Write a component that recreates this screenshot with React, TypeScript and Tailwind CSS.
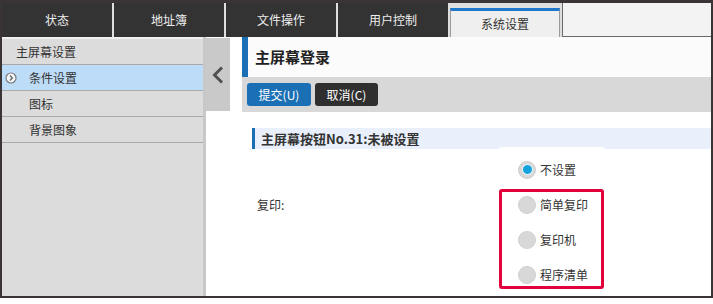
import React from "react";

const tabs = ["状态", "地址簿", "文件操作", "用户控制"];
const menu = [
  { label: "主屏幕设置", top: true },
  { label: "条件设置", active: true },
  { label: "图标" },
  { label: "背景图象" },
];
const options = [
  { label: "不设置", checked: true },
  { label: "简单复印" },
  { label: "复印机" },
  { label: "程序清单" },
];

function Radio({ checked }: { checked?: boolean }) {
  return (
    <span className="w-[18px] h-[18px] rounded-full bg-[#d8d8d8] border border-[#cfcfcf] flex items-center justify-center shrink-0">
      {checked && <span className="w-[11px] h-[11px] rounded-full bg-[#16a2dc] border-[1.5px] border-white" />}
    </span>
  );
}

export default function App() {
  return (
    <div className="w-[713px] h-[304px] bg-white font-['Noto_Sans_CJK_SC',sans-serif] text-[#333]">
      <div className="h-[298px] border-2 border-[#3a3434] flex flex-col overflow-hidden">
        {/* tab bar */}
        <div className="h-[35px] flex gap-[2px] bg-[#dedede] border-t border-[#3a3434] shrink-0">
          {tabs.map(t => (
            <div key={t} className="w-[110px] h-full bg-[#333333] text-[#eeeeee] text-[12px] flex items-center justify-center">
              {t}
            </div>
          ))}
          <div className="w-[110px] mt-[5px] bg-[#efefef] border-t-[3px] border-t-[#1f77c9] border-x border-x-[#9a9a9a] text-[12px] flex items-center justify-center">
            系统设置
          </div>
          <div className="flex-1 bg-[#f3f3f3] border-l border-b border-[#6b6b6b]" />
        </div>

        <div className="flex-1 flex min-h-0">
          {/* sidebar */}
          <div className="w-[204px] bg-[#dcdcdc] border-r-[3px] border-[#c8c8c8] flex flex-col">
            <div className="h-[2px] bg-[#efefef]" />
            {menu.map(m => (
              <div
                key={m.label}
                className={`h-[26px] border-b border-[#a9a9a9] flex items-center text-[12px] ${m.active ? "bg-[#bddcf7]" : ""} ${m.top ? "pl-[14px]" : "pl-[27px]"} relative`}
              >
                {m.active && (
                  <svg className="absolute left-[3px] top-[7px]" width="12" height="12" viewBox="0 0 12 12">
                    <circle cx="6" cy="6" r="5" fill="#f4f8fc" stroke="#7a7a7a" strokeWidth="1.2" />
                    <path d="M5 3.5 L7.3 6 L5 8.5" fill="none" stroke="#666" strokeWidth="1.4" />
                  </svg>
                )}
                {m.label}
              </div>
            ))}
          </div>

          {/* collapse button */}
          <div className="w-[24px] pt-[1px]">
            <div className="h-[73px] bg-[#c9c9c9] flex items-center justify-center">
              <svg width="12" height="18" viewBox="0 0 12 18">
                <path d="M10 1.5 L2.5 9 L10 16.5" fill="none" stroke="#505050" strokeWidth="3" />
              </svg>
            </div>
          </div>

          {/* main */}
          <div className="flex-1 ml-[12px] flex flex-col">
            <div className="h-[40px] bg-[#fbfbfb] border-l-[6px] border-[#1a6fb5] flex items-center pl-[7px] text-[15px] font-bold text-[#222]">
              主屏幕登录
            </div>
            <div className="h-[35px] bg-[#d8d8d8] flex items-start gap-[4px] pl-[5px] pt-[6px]">
              <button className="w-[64px] h-[23px] rounded-[3px] bg-[#1b6fb4] text-white text-[12px]">提交(U)</button>
              <button className="w-[63px] h-[23px] rounded-[3px] bg-[#2f2f2f] text-white text-[12px]">取消(C)</button>
            </div>
            <div className="h-[16px]" />
            <div className="ml-[10px] h-[21px] border-l-[3px] border-[#1a6fb5] bg-[#e9f0fb] flex items-center pl-[6px] text-[13px] font-bold">
              主屏幕按钮No.31:未被设置
            </div>
            <div className="flex">
              <div className="w-[256px] pl-[15px] pt-[47px] text-[12px]">复印:</div>
              <div className="w-[107px] -mt-[2px] bg-white rounded-[4px] pt-[5px] relative">
                {options.map(o => (
                  <div key={o.label} className="h-[35px] flex items-center gap-[4px] pl-[20px] text-[12px]">
                    <Radio checked={o.checked} />
                    {o.label}
                  </div>
                ))}
                <div className="absolute left-[1px] top-[42px] w-[105px] h-[100px] border-[3px] border-[#e2003c] rounded-[3px]" />
              </div>
            </div>
          </div>
        </div>
      </div>
    </div>
  );
}
